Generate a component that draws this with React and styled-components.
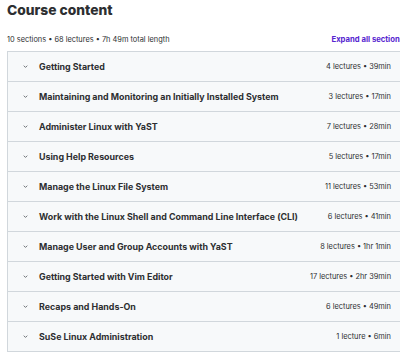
import React from 'react';
import styled, { createGlobalStyle } from 'styled-components';

const sections = [
  { title: 'Getting Started', meta: '4 lectures • 39min' },
  { title: 'Maintaining and Monitoring an Initially Installed System', meta: '3 lectures • 17min' },
  { title: 'Administer Linux with YaST', meta: '7 lectures • 28min' },
  { title: 'Using Help Resources', meta: '5 lectures • 17min' },
  { title: 'Manage the Linux File System', meta: '11 lectures • 53min' },
  { title: 'Work with the Linux Shell and Command Line Interface (CLI)', meta: '6 lectures • 41min' },
  { title: 'Manage User and Group Accounts with YaST', meta: '8 lectures • 1hr 1min' },
  { title: 'Getting Started with Vim Editor', meta: '17 lectures • 2hr 39min' },
  { title: 'Recaps and Hands-On', meta: '6 lectures • 49min' },
  { title: 'SuSe Linux Administration', meta: '1 lecture • 6min' },
];

const GlobalStyle = createGlobalStyle`
  body {
    margin: 0;
    background: #fff;
    font-family: "Inter", "Liberation Sans", sans-serif;
    color: #2d2f31;
  }
`;

const Page = styled.div`
  width: 400px;
  height: 352px;
  overflow: hidden;
  padding: 0 0 0 7px;
  box-sizing: border-box;
`;

const Heading = styled.h2`
  margin: 0;
  padding-top: 1px;
  font-size: 13.8px;
  line-height: 18px;
  font-weight: 800;
`;

const InfoBar = styled.div`
  display: flex;
  justify-content: space-between;
  align-items: center;
  margin-top: 13px;
  height: 14px;
  width: 397px;
  font-size: 7.4px;
`;

const Expand = styled.span`
  color: #5624d0;
  font-weight: 700;
  font-size: 7.7px;
  white-space: nowrap;
`;

const List = styled.div`
  margin-top: 5px;
  width: 392px;
  border-top: 1px solid #d1d7dc;
  border-left: 1px solid #d1d7dc;
`;

const Row = styled.div`
  display: flex;
  align-items: center;
  height: 29px;
  background: #f7f9fa;
  border-bottom: 1px solid #d1d7dc;
  padding: 0 9px 0 14px;
`;

const Chevron = styled.svg`
  width: 7px;
  height: 7px;
  flex: none;
  stroke: #6a6f73;
  fill: none;
  stroke-width: 1.4;
`;

const Title = styled.span`
  flex: 1;
  margin-left: 10px;
  font-size: 8.9px;
  font-weight: 700;
  white-space: nowrap;
`;

const Meta = styled.span`
  font-size: 7.4px;
  color: #2d2f31;
  white-space: nowrap;
`;

export default function App() {
  return (
    <Page>
      <GlobalStyle />
      <Heading>Course content</Heading>
      <InfoBar>
        <span>10 sections • 68 lectures • 7h 49m total length</span>
        <Expand>Expand all sections</Expand>
      </InfoBar>
      <List>
        {sections.map((s) => (
          <Row key={s.title}>
            <Chevron viewBox="0 0 10 10">
              <path d="M2.5 3.8 L5 6.3 L7.5 3.8" />
            </Chevron>
            <Title>{s.title}</Title>
            <Meta>{s.meta}</Meta>
          </Row>
        ))}
      </List>
    </Page>
  );
}
